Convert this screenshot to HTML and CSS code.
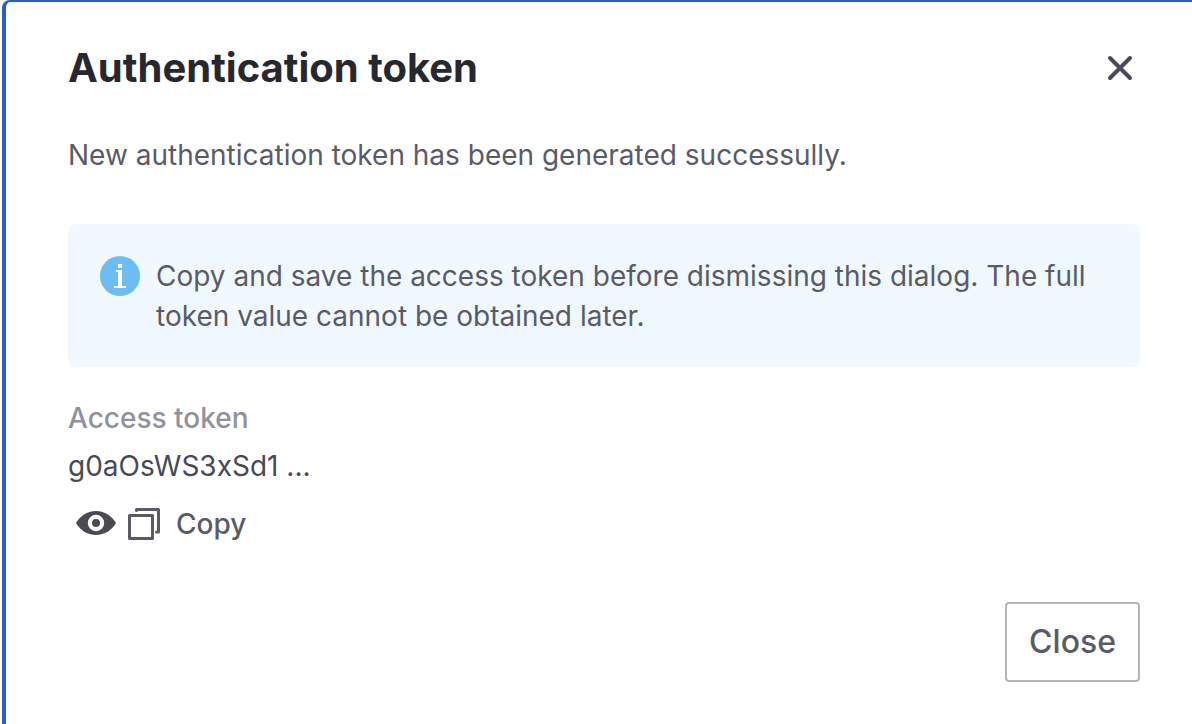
FILE: index.html
```html
<!DOCTYPE html>
<html lang="en">
<head>
<meta charset="utf-8">
<title>Authentication token</title>
<link rel="stylesheet" href="styles.css">
</head>
<body>
<div class="dialog" role="dialog" aria-labelledby="dialog-title">
  <header class="dialog-header">
    <h1 class="dialog-title" id="dialog-title">Authentication token</h1>
    <button class="icon-button" type="button" aria-label="Dismiss">
      <svg width="40" height="40" viewBox="0 0 40 40" fill="none" stroke="#4a4a57" stroke-width="4" stroke-linecap="round"><path d="M10 10 30 30M30 10 10 30"/></svg>
    </button>
  </header>
  <p class="message">New authentication token has been generated successully.</p>
  <div class="notice" role="note">
    <svg class="notice-icon" width="40" height="40" viewBox="0 0 40 40"><circle cx="20" cy="20" r="20" fill="#6cbef2"/><path fill="#fff" d="M18 8h4v4h-4zM16 14h6v16h4v2H14v-2h4V16h-2z"/></svg>
    <p class="notice-text">Copy and save the access token before dismissing this dialog. The full token value cannot be obtained later.</p>
  </div>
  <dl class="token">
    <dt class="token-label">Access token</dt>
    <dd class="token-value">g0aOsWS3xSd1 ...</dd>
  </dl>
  <div class="token-actions">
    <button class="icon-button" type="button" aria-label="Show token">
      <svg width="40" height="32" viewBox="0 0 40 32"><path fill="#4a4a57" fill-rule="evenodd" d="M0 15C4 8 11 3 20 3s16 5 20 12C36 22 29 27 20 27S4 22 0 15ZM20 6.800a8.200 8.200 0 1 0 0 16.400a8.200 8.200 0 0 0 0-16.400Z"/><circle cx="20" cy="15" r="4" fill="#4a4a57"/></svg>
    </button>
    <button class="copy-button" type="button">
      <svg width="32" height="32" viewBox="0 0 32 32" fill="none" stroke="#5b5b68" stroke-linejoin="round"><path stroke-width="3" d="M1.500 7.500h23v23h-23z"/><path stroke-width="3" stroke-linecap="round" d="M8.500 2.500V1.500h22v22.500H28.500"/></svg>
      <span>Copy</span>
    </button>
  </div>
  <footer class="dialog-footer">
    <button class="close-button" type="button">Close</button>
  </footer>
</div>
</body>
</html>
```
FILE: styles.css
```css
* {
  box-sizing: border-box;
}

body {
  margin: 0;
  background: #fff;
  color: #5b5b68;
  font: 28px/40px Inter, "Liberation Sans", sans-serif;
}

h1, p, dl, dd {
  margin: 0;
}

button {
  padding: 0;
  border: 0;
  background: none;
  color: inherit;
  font: inherit;
  cursor: pointer;
}

svg {
  display: block;
  flex: none;
}

.dialog {
  min-height: 100vh;
  margin-left: 2px;
  padding: 42px 52px 42px 62px;
  border-top: 2px solid #2b5fc7;
  border-left: 4px solid #2b5fc7;
  border-top-left-radius: 8px;
}

.dialog-header {
  display: flex;
  align-items: center;
  justify-content: space-between;
}

.dialog-title {
  color: #27272f;
  font-size: 40px;
  font-weight: 700;
  line-height: 48px;
}

.message {
  margin-top: 43px;
}

.notice {
  display: flex;
  gap: 16px;
  margin-top: 49px;
  padding: 32px 32px 31px;
  border-radius: 8px;
  background: #f0f9ff;
}

.token {
  margin-top: 31px;
}

.token-label {
  color: #92929d;
  font-weight: 500;
}

.token-value {
  margin-top: 8px;
  color: #4a4a57;
}

.token-actions {
  display: flex;
  align-items: center;
  gap: 12px;
  margin-top: 18px;
  padding-left: 8px;
}

.copy-button {
  display: flex;
  align-items: center;
  gap: 16px;
  font-weight: 500;
}

.dialog-footer {
  display: flex;
  justify-content: flex-end;
  margin-top: 58px;
}

.close-button {
  padding: 18px 22px;
  border: 2px solid #b4b4bb;
  border-radius: 4px;
  font-size: 32px;
  font-weight: 500;
}
```
